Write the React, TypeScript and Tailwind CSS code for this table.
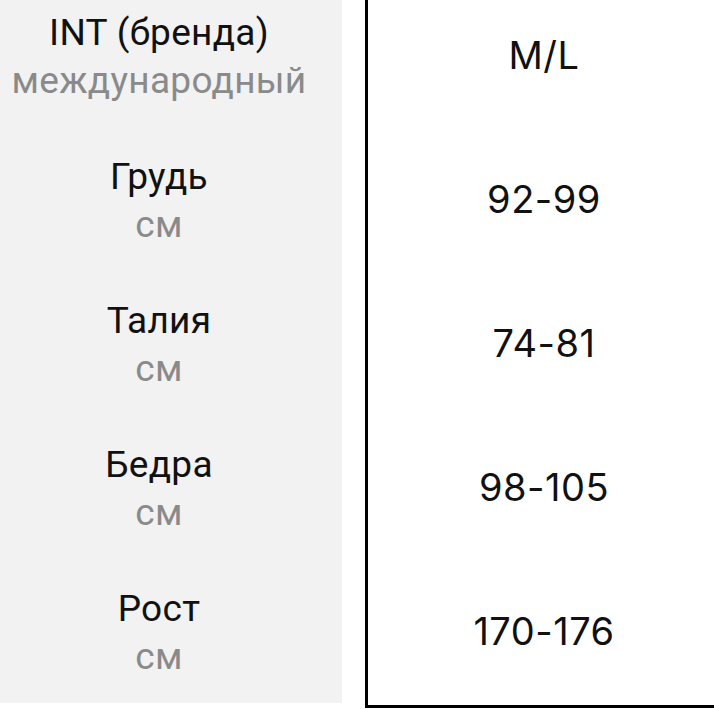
const rows = [
  { label: "INT (бренда)", unit: "международный", value: "M/L" },
  { label: "Грудь", unit: "см", value: "92-99" },
  { label: "Талия", unit: "см", value: "74-81" },
  { label: "Бедра", unit: "см", value: "98-105" },
  { label: "Рост", unit: "см", value: "170-176" },
];

export default function App() {
  return (
    <div className="w-[714px] h-[709px] overflow-hidden bg-white">
      <div className="-mt-[17px] flex items-start w-[740px]">
        {/* Labels */}
        <div className="w-[342px] shrink-0 bg-[#f2f2f2] pr-[24px] font-['Roboto',sans-serif] text-[37px] leading-[48px] tracking-[0.3px]">
          {rows.map((row) => (
            <div
              key={row.label}
              className="h-[144px] flex flex-col items-center justify-center pt-[3px]"
            >
              <span className="text-[#111]">{row.label}</span>
              <span className="text-[#8a8a8a]">{row.unit}</span>
            </div>
          ))}
        </div>

        {/* Size column */}
        <div className="ml-[23px] w-[358px] shrink-0 border-l-[3px] border-b-[3px] border-black pb-[2px] font-['Inter',sans-serif] text-[38px] tracking-[0.5px] text-[#111]">
          {rows.map((row) => (
            <div
              key={row.value}
              className="h-[144px] flex items-center justify-center pr-[3px]"
            >
              {row.value}
            </div>
          ))}
        </div>
      </div>
    </div>
  );
}
